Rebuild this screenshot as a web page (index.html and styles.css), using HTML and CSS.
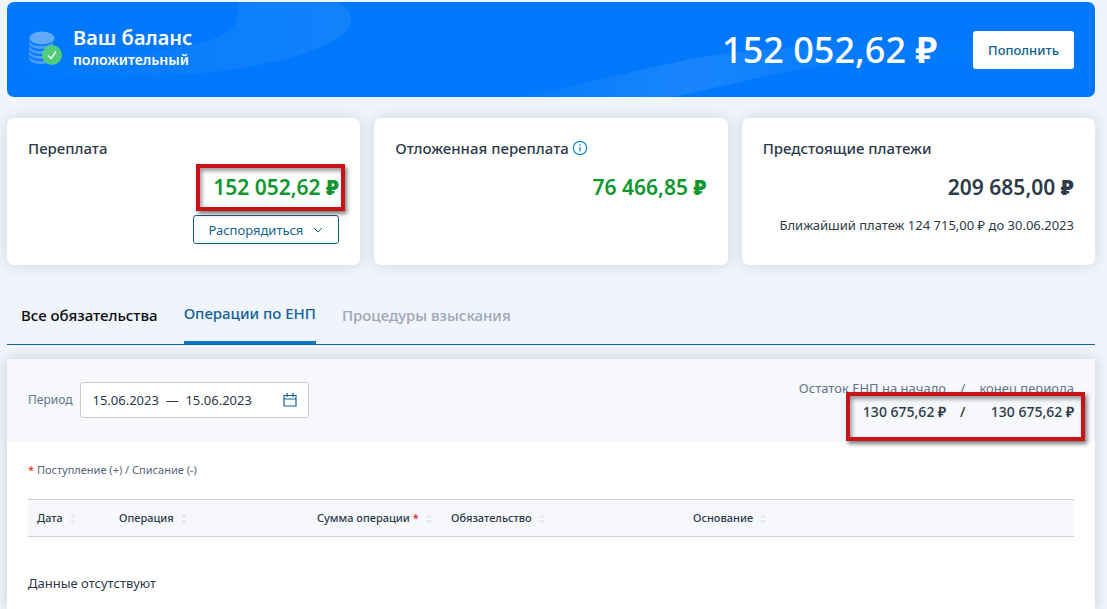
FILE: index.html
```html
<!DOCTYPE html>
<html lang="ru">
<head>
<meta charset="utf-8">
<meta name="viewport" content="width=device-width, initial-scale=1">
<title>Баланс</title>
<link rel="stylesheet" href="styles.css">
</head>
<body>
<main class="page">
  <section class="banner">
    <svg class="banner-waves" viewBox="0 0 1088 95" preserveAspectRatio="none" aria-hidden="true">
      <defs>
        <linearGradient id="wave-left" x1="0" x2="1" y1="0" y2="0">
          <stop offset="0" stop-color="#fff" stop-opacity="0"/>
          <stop offset="0.6" stop-color="#fff" stop-opacity="0.05"/>
          <stop offset="1" stop-color="#fff" stop-opacity="0.07"/>
        </linearGradient>
        <linearGradient id="wave-right" x1="0" x2="1" y1="0" y2="0">
          <stop offset="0" stop-color="#fff" stop-opacity="0.02"/>
          <stop offset="0.3" stop-color="#fff" stop-opacity="0.1"/>
          <stop offset="0.6" stop-color="#fff" stop-opacity="0.02"/>
          <stop offset="1" stop-color="#fff" stop-opacity="0"/>
        </linearGradient>
      </defs>
      <path fill="url(#wave-left)" d="M231 0C230 18 230 24 220 30C180 54 90 56 0 51V72C90 78 180 74 230 67C290 57 344 40 344 18C344 10 339 4 331 0Z"/>
      <path fill="url(#wave-right)" d="M510 95C590 80 640 65 690 56C760 43 900 38 1088 46V62C920 55 850 58 790 68C750 75 720 84 665 95Z"/>
    </svg>
    <svg class="coins" viewBox="0 0 34 34" aria-hidden="true">
      <g fill="#4a9dfc">
        <path d="M1 10c2 4 7 5 12 5s10-1 12-5v3c-3 3-7 5-12 5S2 16 1 13z"/>
        <path d="M1 15c2 4 7 5 12 5s9-1 11-4v3c-3 3-6 4-11 4S2 21 1 18z"/>
        <path d="M1 20c2 4 7 5 12 5s7-1 9-3v4c-3 1-5 2-9 2-5 0-11-2-12-5z"/>
        <path d="M1 25c2 4 7 5 12 5h6v2c-2 1-4 1-6 1-5 0-11-2-12-5z"/>
      </g>
      <ellipse cx="14" cy="7" rx="12.500" ry="6.500" fill="#62abfb"/>
      <circle cx="24" cy="24" r="10" fill="#51cc7a"/>
      <path d="M20 24.500l3 3 5-7" fill="none" stroke="#fff" stroke-width="1.3"/>
    </svg>
    <h1 class="banner-title">Ваш баланс <span class="banner-state">положительный</span></h1>
    <strong class="banner-amount">152 052,62 <b>₽</b></strong>
    <button class="topup" type="button">Пополнить</button>
  </section>

  <section class="cards">
    <article class="card">
      <h2 class="card-title">Переплата</h2>
      <p class="card-amount positive"><span class="marked">152 052,62 <b>₽</b><span class="mark mark-card"></span></span></p>
      <button class="manage" type="button">Распорядиться
        <svg class="chevron" viewBox="0 0 10 10" aria-hidden="true"><path d="M1 3l4 4 4-4" fill="none" stroke="currentColor"/></svg>
      </button>
    </article>
    <article class="card">
      <h2 class="card-title">Отложенная переплата
        <svg class="info" viewBox="0 0 16 16" aria-hidden="true"><circle cx="8" cy="8" r="6.7" fill="none" stroke="currentColor" stroke-width="1.2"/><path d="M8 7v4.5M8 4.2v1.5" stroke="currentColor" stroke-width="1.3"/></svg>
      </h2>
      <p class="card-amount positive">76 466,85 <b>₽</b></p>
    </article>
    <article class="card">
      <h2 class="card-title">Предстоящие платежи</h2>
      <p class="card-amount">209 685,00 <b>₽</b></p>
      <p class="card-note">Ближайший платеж 124 715,00 ₽ до 30.06.2023</p>
    </article>
  </section>

  <nav class="tabs">
    <a class="tab" href="#all">Все обязательства</a>
    <a class="tab tab-active" href="#operations" aria-current="page">Операции по ЕНП</a>
    <a class="tab tab-muted" href="#collection">Процедуры взыскания</a>
  </nav>

  <section class="panel">
    <div class="filter">
      <label class="filter-label" for="period">Период</label>
      <div class="date-field">
        <input class="date-input" id="period" type="text" value="15.06.2023  —  15.06.2023">
        <button class="date-button" type="button" aria-label="Открыть календарь">
          <svg class="calendar" viewBox="0 0 14 14" aria-hidden="true"><path d="M1 2.5h12v10.500H1zM1 6h12M4 0v4M10 0v4" fill="none" stroke="currentColor" stroke-width="1.2"/></svg>
        </button>
      </div>
      <div class="balance">
        <span class="balance-label">Остаток ЕНП на начало</span>
        <span class="balance-label">/</span>
        <span class="balance-label">конец периода</span>
        <strong class="balance-value">130 675,62 <span class="ruble">₽</span></strong>
        <strong class="balance-value">/</strong>
        <strong class="balance-value">130 675,62 <span class="ruble">₽</span></strong>
        <span class="mark mark-balance"></span>
      </div>
    </div>
    <div class="panel-body">
      <p class="legend"><span class="required">*</span> Поступление (+) / Списание (-)</p>
      <table class="operations">
        <colgroup><col class="col-date"><col class="col-operation"><col class="col-sum"><col class="col-duty"><col></colgroup>
        <thead>
          <tr>
            <th scope="col">Дата<svg class="sort" viewBox="0 0 8 12" aria-hidden="true"><path d="M1 4.500l3-3 3 3zM1 7.500l3 3 3-3z"/></svg></th>
            <th scope="col">Операция<svg class="sort" viewBox="0 0 8 12" aria-hidden="true"><path d="M1 4.500l3-3 3 3zM1 7.500l3 3 3-3z"/></svg></th>
            <th scope="col">Сумма операции <span class="required">*</span><svg class="sort" viewBox="0 0 8 12" aria-hidden="true"><path d="M1 4.500l3-3 3 3zM1 7.500l3 3 3-3z"/></svg></th>
            <th scope="col">Обязательство<svg class="sort" viewBox="0 0 8 12" aria-hidden="true"><path d="M1 4.500l3-3 3 3zM1 7.500l3 3 3-3z"/></svg></th>
            <th scope="col">Основание<svg class="sort" viewBox="0 0 8 12" aria-hidden="true"><path d="M1 4.500l3-3 3 3zM1 7.500l3 3 3-3z"/></svg></th>
          </tr>
        </thead>
        <tbody>
          <tr><td class="empty" colspan="5">Данные отсутствуют</td></tr>
        </tbody>
      </table>
    </div>
  </section>
</main>
</body>
</html>
```
FILE: styles.css
```css
* {
  box-sizing: border-box;
}

body {
  margin: 0;
  background: #f0f4fc;
  color: #2c3a4a;
  font-family: "Noto Sans", "Open Sans", sans-serif;
  font-size: 13px;
  line-height: 20px;
}

h1, h2, p {
  margin: 0;
}

button, input {
  font: inherit;
}

.page {
  padding: 2px 12px 0 7px;
}

.banner {
  position: relative;
  display: flex;
  align-items: center;
  min-height: 95px;
  padding: 0 21px;
  border-radius: 7px;
  background: #0078fc;
  color: #fff;
  overflow: hidden;
}

.banner-waves {
  position: absolute;
  inset: 0;
  width: 100%;
  height: 100%;
}

.coins {
  position: relative;
  width: 34px;
  height: 34px;
  margin: 0 11px 4px 0;
}

.banner-title {
  position: relative;
  padding-bottom: 4px;
  font-size: 20px;
  font-weight: 600;
  line-height: 24px;
}

.banner-state {
  display: block;
  font-size: 14px;
  line-height: 20px;
}

.banner-amount {
  position: relative;
  margin-left: auto;
  font-size: 36px;
  font-weight: 500;
  line-height: 48px;
}

.topup {
  position: relative;
  min-height: 38px;
  margin-left: 36px;
  padding: 0 15px;
  border: 0;
  border-radius: 3px;
  background: #fff;
  color: #0c5f8c;
  font-weight: 500;
}

.cards {
  display: grid;
  grid-template-columns: repeat(3, 1fr);
  gap: 14px;
  margin-top: 21px;
}

.card {
  display: flex;
  flex-direction: column;
  align-items: flex-end;
  min-height: 147px;
  padding: 20px 21px;
  border-radius: 7px;
  background: #fff;
  box-shadow: 0 0 14px rgba(90, 90, 90, 0.2);
}

.card-title {
  display: flex;
  align-items: center;
  align-self: flex-start;
  gap: 3px;
  font-size: 15px;
  font-weight: 500;
  line-height: 20px;
}

.info {
  width: 16px;
  height: 16px;
  color: #1686d9;
}

.card-amount {
  margin-top: 13px;
  font-size: 21px;
  font-weight: 600;
  line-height: 32px;
}

.positive {
  color: #10962f;
}

.marked {
  position: relative;
}

.mark {
  position: absolute;
  border: 4px solid #c81418;
  box-shadow: 2px 3px 4px rgba(0, 0, 0, 0.5), inset 2px 3px 4px rgba(0, 0, 0, 0.4);
  pointer-events: none;
}

.mark-card {
  inset: -9px -6px -10px -17px;
}

.manage {
  display: flex;
  align-items: center;
  gap: 10px;
  min-height: 29px;
  margin-top: 12px;
  padding: 0 15px 0 14px;
  border: 1px solid #12658c;
  border-radius: 3px;
  background: #fff;
  color: #12658c;
}

.chevron {
  width: 10px;
  height: 10px;
}

.card-note {
  margin-top: 12px;
}

.tabs {
  display: flex;
  align-items: flex-end;
  gap: 26px;
  margin-top: 38px;
  padding-left: 14px;
  border-bottom: 1px solid #12658c;
}

.tab {
  padding-bottom: 19px;
  color: #0b0d10;
  font-size: 15px;
  font-weight: 500;
  line-height: 20px;
  text-decoration: none;
}

.tab-active {
  padding-bottom: 18px;
  border-bottom: 3px solid #1474cc;
  color: #12629c;
}

.tab-muted {
  color: #9ba7b9;
}

.panel {
  margin-top: 14px;
  background: #fff;
  box-shadow: 0 0 12px rgba(90, 90, 90, 0.25);
}

.filter {
  display: flex;
  align-items: flex-start;
  min-height: 83px;
  padding: 19px 21px 0;
  background: #f6f8fc;
}

.filter-label {
  margin: 12px 8px 0 0;
  color: #647389;
  font-size: 12px;
}

.date-field {
  display: flex;
  align-items: center;
  width: 229px;
  height: 36px;
  margin-top: 4px;
  padding: 0 11px;
  border: 1px solid #c5ccd8;
  border-radius: 3px;
  background: #fff;
}

.date-input {
  flex: 1;
  min-width: 0;
  padding: 0;
  border: 0;
  background: none;
  color: #2c3a4a;
}

.date-button {
  display: flex;
  padding: 0;
  border: 0;
  background: none;
  color: #12629c;
}

.calendar {
  width: 14px;
  height: 14px;
}

.balance {
  position: relative;
  display: grid;
  grid-template-columns: auto auto auto;
  column-gap: 14px;
  row-gap: 4px;
  margin-left: auto;
  text-align: right;
}

.balance-label {
  color: #647389;
}

.balance-value {
  font-size: 14px;
  font-weight: 500;
}

.ruble {
  font-family: "Liberation Serif", serif;
  font-weight: 700;
}

.mark-balance {
  right: -11px;
  bottom: -18px;
  width: 239px;
  height: 49px;
}

.panel-body {
  padding: 18px 21px 16px;
}

.legend {
  color: #56657b;
  font-size: 11px;
}

.required {
  color: #e02020;
}

.operations {
  width: 100%;
  margin-top: 19px;
  border-collapse: collapse;
  table-layout: fixed;
}

.operations th {
  height: 37px;
  padding: 0 0 0 9px;
  border: solid #ccd0d8;
  border-width: 1px 0;
  background: #f6f8fc;
  font-size: 11px;
  font-weight: 500;
  text-align: left;
  white-space: nowrap;
}

.col-date {
  width: 82px;
}

.col-operation {
  width: 198px;
}

.col-sum {
  width: 134px;
}

.col-duty {
  width: 242px;
}

.sort {
  width: 8px;
  height: 12px;
  margin-left: 6px;
  vertical-align: middle;
  fill: #dfe3ea;
}

.empty {
  padding: 36px 0 0;
}
```
